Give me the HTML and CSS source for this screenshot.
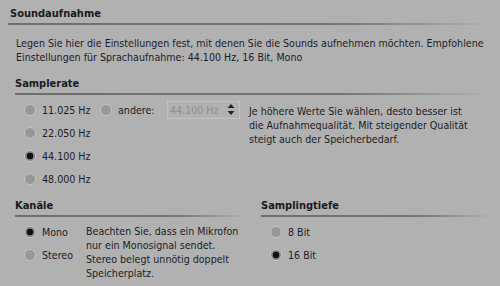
FILE: index.html
```html
<!DOCTYPE html>
<html>
<head>
<meta charset="utf-8">
<link rel="stylesheet" href="styles.css">
</head>
<body>
<div class="main">
  <div class="h1">Soundaufnahme</div>
  <div class="rule"></div>
  <p class="intro">Legen Sie hier die Einstellungen fest, mit denen Sie die Sounds aufnehmen möchten. Empfohlene Einstellungen für Sprachaufnahme: 44.100 Hz, 16 Bit, Mono</p>

  <section class="sec sr">
    <div class="h2">Samplerate</div>
    <div class="rule"></div>
    <div class="sr-body">
      <div class="sr-radios">
        <div class="sr-row">
          <label class="radio first"><span class="dot"></span>11.025 Hz</label>
          <label class="radio other"><span class="dot"></span>andere:</label>
          <div class="spin"><span class="spin-val">44.100 Hz</span>
            <svg class="spin-arrows" width="8" height="13" viewBox="0 0 8 13"><path d="M4 1 L7.5 5 H0.5 Z M4 12 L7.5 8 H0.5 Z" fill="#222"/></svg>
          </div>
        </div>
        <label class="radio"><span class="dot"></span>22.050 Hz</label>
        <label class="radio"><span class="dot on"></span>44.100 Hz</label>
        <label class="radio"><span class="dot"></span>48.000 Hz</label>
      </div>
      <p class="sr-text">Je höhere Werte Sie wählen, desto besser ist die Aufnahmequalität. Mit steigender Qualität steigt auch der Speicherbedarf.</p>
    </div>
  </section>

  <div class="bottom">
    <section class="sec ch">
      <div class="h2">Kanäle</div>
      <div class="rule"></div>
      <div class="ch-body">
        <div class="ch-radios">
          <label class="radio"><span class="dot on"></span>Mono</label>
          <label class="radio"><span class="dot"></span>Stereo</label>
        </div>
        <p class="ch-text">Beachten Sie, dass ein Mikrofon nur ein Monosignal sendet. Stereo belegt unnötig doppelt Speicherplatz.</p>
      </div>
    </section>
    <section class="sec depth">
      <div class="h2">Samplingtiefe</div>
      <div class="rule"></div>
      <div class="depth-radios">
        <label class="radio"><span class="dot"></span>8 Bit</label>
        <label class="radio"><span class="dot on"></span>16 Bit</label>
      </div>
    </section>
  </div>
</div>
</body>
</html>
```

FILE: styles.css
```css
html, body {
  margin: 0;
  padding: 0;
  background: #b1b1b1;
}
body {
  width: 500px;
  height: 286px;
  overflow: hidden;
  font-family: "DejaVu Sans Condensed", "DejaVu Sans", sans-serif;
  font-size: 10.6px;
  line-height: 14px;
  color: #1c1c28;
}
.main {
  padding: 7px 10px 0 8px;
}
.h1, .h2 {
  font-weight: bold;
  color: #1a1a22;
  height: 14px;
  font-size: 11px;
}
.h1 {
  padding-left: 2px;
}
.rule {
  margin-top: 2px;
  height: 2px;
  background: linear-gradient(to right, #6e6e6e 0%, #767676 70%, rgba(177,177,177,0) 100%);
}
.intro {
  margin: 11px 0 0 8px;
}
.sec {
  padding-left: 7px;
}
.sr {
  margin-top: 13px;
}
.sr-body {
  display: flex;
  gap: 8px;
  margin-top: 3px;
}
.sr-radios {
  display: flex;
  flex-direction: column;
  width: 226px;
  flex: none;
}
.sr-row {
  display: flex;
  align-items: center;
}
.radio {
  display: flex;
  align-items: center;
  height: 23px;
  gap: 6px;
  padding-left: 9px;
}
.radio.first {
  width: 85px;
  box-sizing: border-box;
  flex: none;
}
.radio.other {
  padding-left: 0;
  width: 67px;
  flex: none;
}
.dot {
  width: 12px;
  height: 12px;
  box-sizing: border-box;
  border-radius: 50%;
  background: #979797;
  border: 1px solid #c4c4c4;
  flex: none;
}
.dot.on {
  background: radial-gradient(circle, #111 0, #111 3px, #7e7e7e 3.6px, #8a8a8a 100%);
  border-color: #c4c4c4;
}
.spin {
  width: 73px;
  height: 18px;
  box-sizing: border-box;
  border: 1px solid #c2c2c2;
  display: flex;
  align-items: center;
  justify-content: space-between;
  padding: 0 4px 0 2px;
  color: #8e8e8e;
  flex: none;
}
.spin-arrows {
  display: block;
}
.sr-text {
  margin: 6px 0 0 0;
  width: 224px;
}
.bottom {
  display: flex;
  margin-top: 9px;
}
.ch {
  width: 232px;
  flex: none;
}
.ch-body {
  display: flex;
  margin-top: 3px;
}
.ch-radios {
  display: flex;
  flex-direction: column;
  width: 71px;
  flex: none;
}
.ch-text {
  margin: 4px 0 0 0;
}
.depth {
  margin-left: 7px;
  flex: 1;
}
.depth-radios {
  display: flex;
  flex-direction: column;
  margin-top: 3px;
}
```
